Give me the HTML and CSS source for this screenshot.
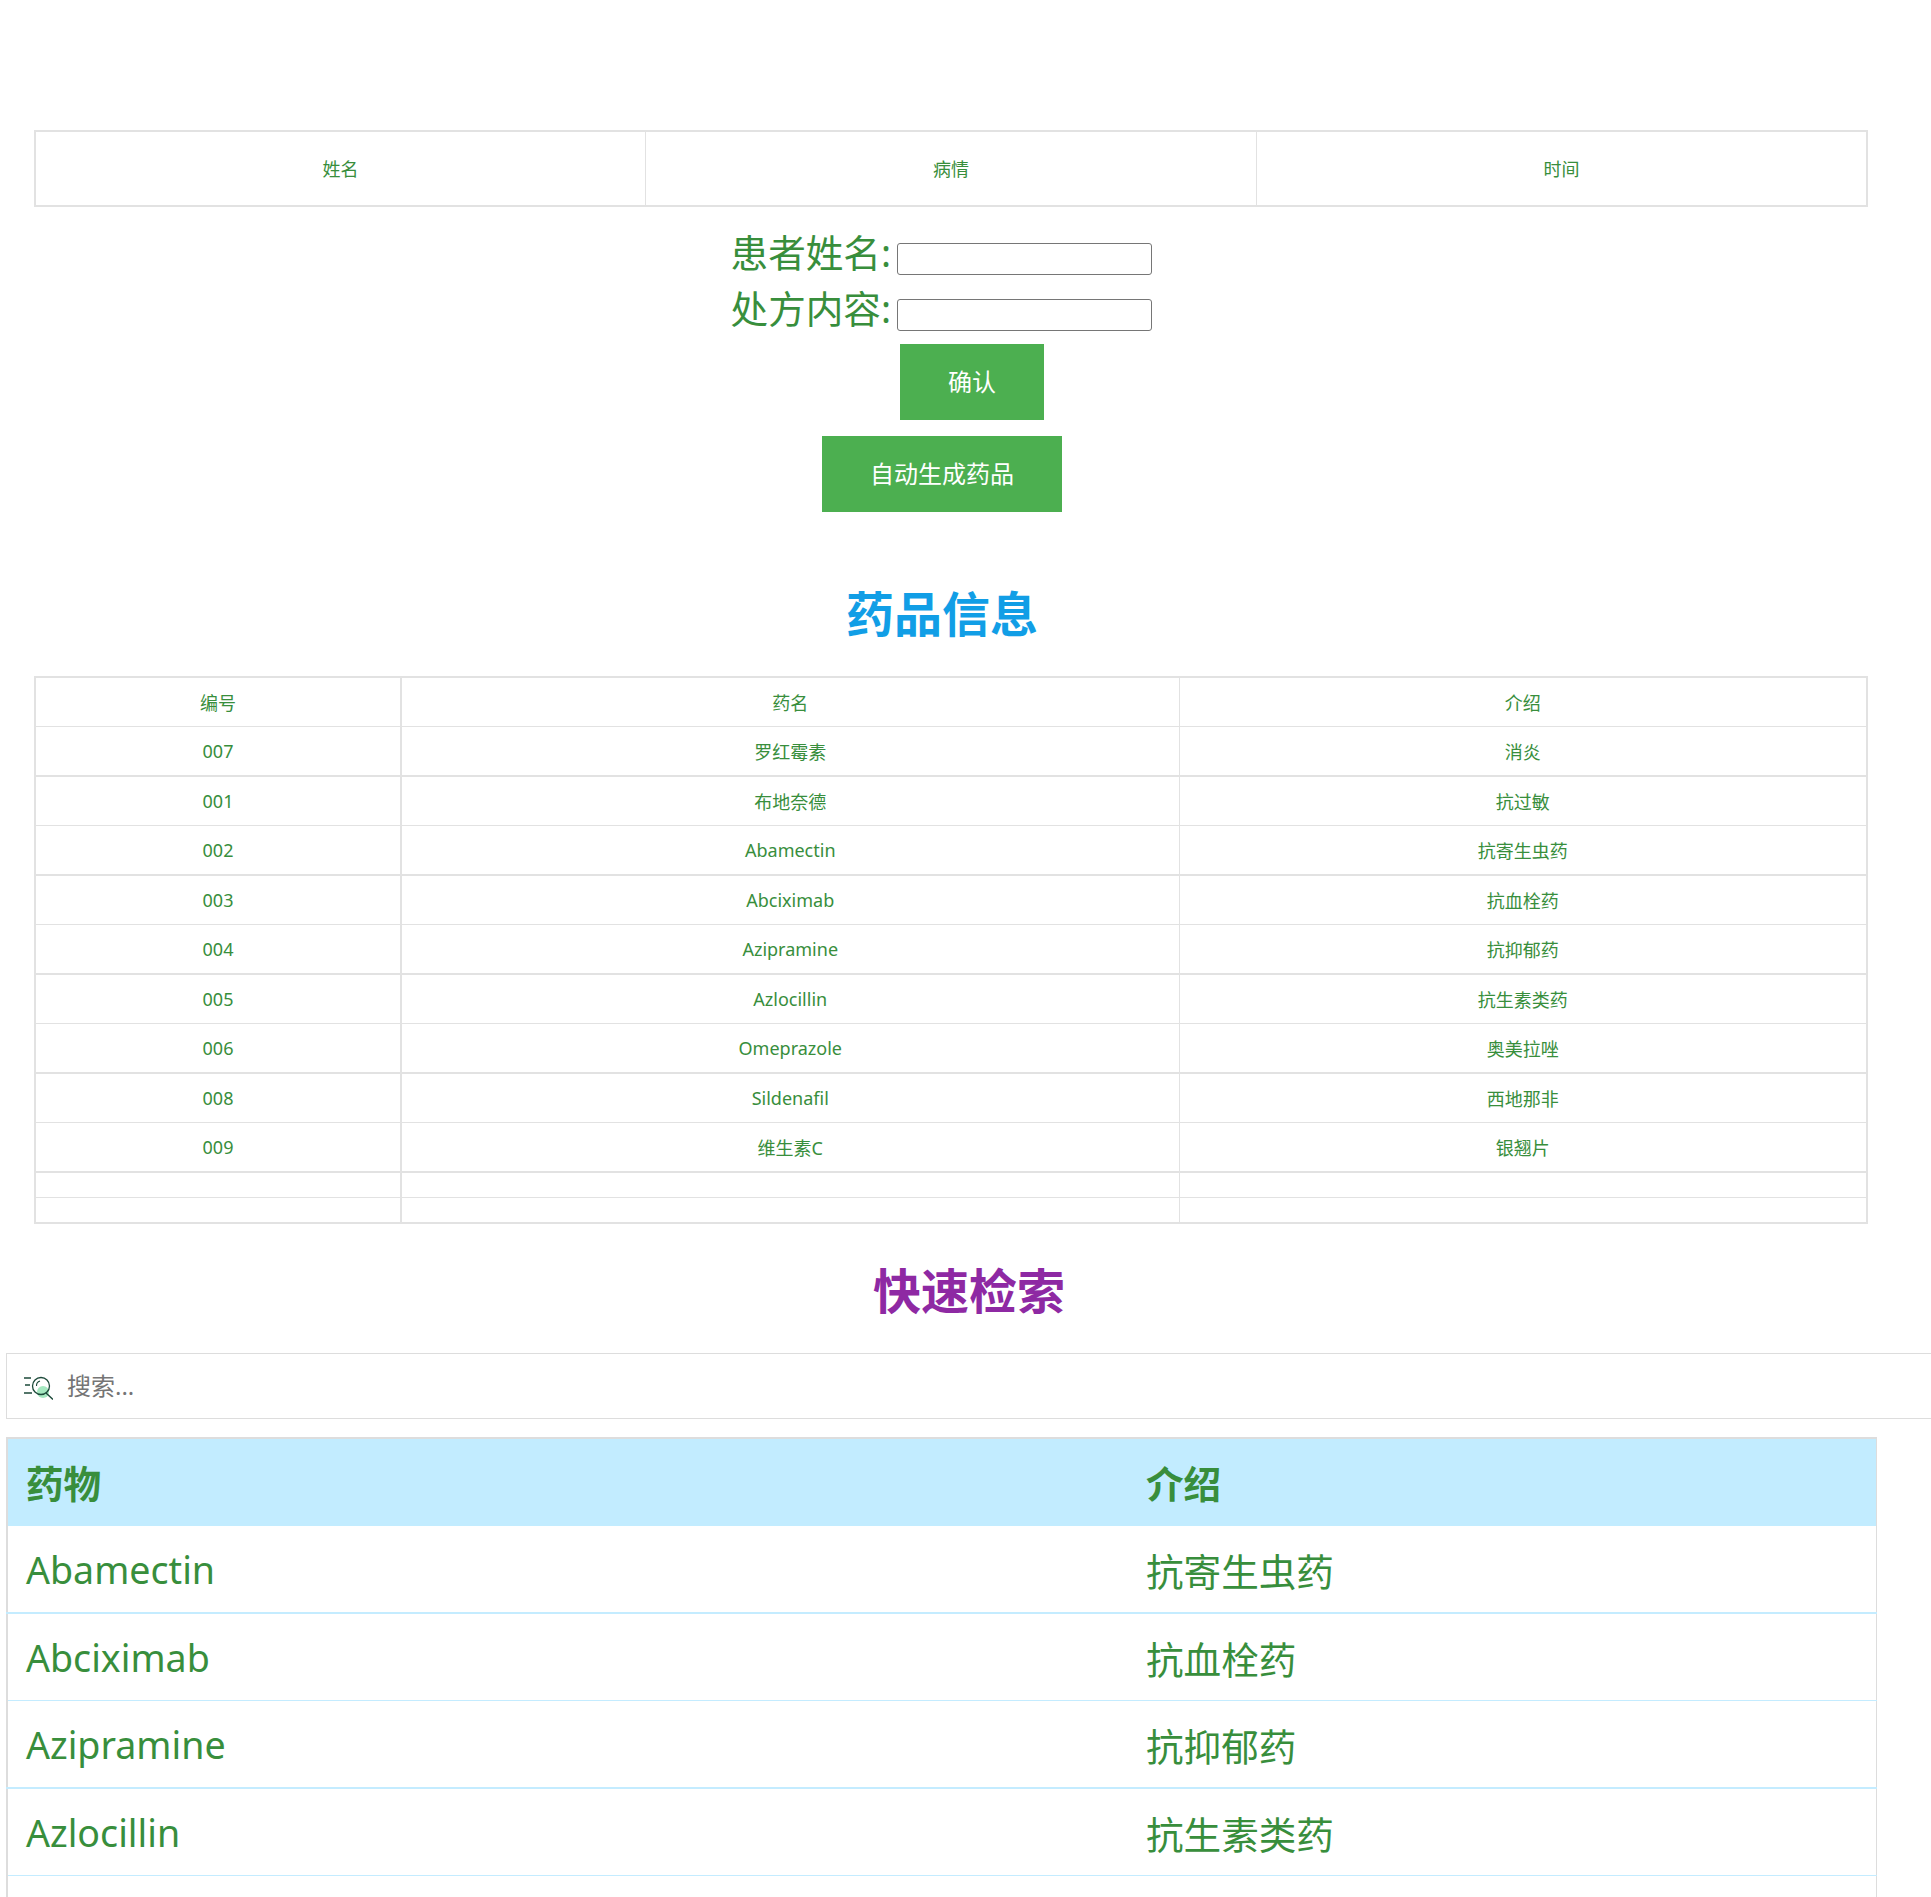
FILE: index.html
```html
<!DOCTYPE html>
<html lang="zh-CN">
<head>
<meta charset="utf-8">
<title>处方</title>
<link rel="stylesheet" href="styles.css">
</head>
<body>
<main class="page">
  <table class="records">
    <tr><td>姓名</td><td>病情</td><td>时间</td></tr>
  </table>
  <form class="rx-form">
    <div class="field"><label class="field-label">患者姓名:</label><input class="field-input" type="text"></div>
    <div class="field"><label class="field-label">处方内容:</label><input class="field-input" type="text"></div>
    <div class="confirm-row"><button class="btn" type="button">确认</button></div>
    <div class="auto-row"><button class="btn" type="button">自动生成药品</button></div>
  </form>
  <h2 class="title title-blue">药品信息</h2>
  <table class="drugs">
    <colgroup><col class="c1"><col class="c2"><col class="c3"></colgroup>
    <tr><td>编号</td><td>药名</td><td>介绍</td></tr>
    <tr><td>007</td><td>罗红霉素</td><td>消炎</td></tr>
    <tr><td>001</td><td>布地奈德</td><td>抗过敏</td></tr>
    <tr><td>002</td><td>Abamectin</td><td>抗寄生虫药</td></tr>
    <tr><td>003</td><td>Abciximab</td><td>抗血栓药</td></tr>
    <tr><td>004</td><td>Azipramine</td><td>抗抑郁药</td></tr>
    <tr><td>005</td><td>Azlocillin</td><td>抗生素类药</td></tr>
    <tr><td>006</td><td>Omeprazole</td><td>奥美拉唑</td></tr>
    <tr><td>008</td><td>Sildenafil</td><td>西地那非</td></tr>
    <tr><td>009</td><td>维生素C</td><td>银翘片</td></tr>
    <tr class="blank"><td></td><td></td><td></td></tr>
    <tr class="blank"><td></td><td></td><td></td></tr>
  </table>
  <h2 class="title title-purple">快速检索</h2>
  <div class="search">
    <svg class="search-icon" viewBox="0 0 29 24" aria-hidden="true">
      <circle cx="19" cy="16" r="6" fill="#a5e8c0"/>
      <circle cx="17" cy="10" r="8.5" fill="none" stroke="#1d4a3a" stroke-width="1.3"/>
      <path d="M12.5 10a5 5 0 0 1 3.5-5" fill="none" stroke="#1d4a3a" stroke-width="1.1"/>
      <path d="M22 17l7 6.500M0 2h7M1 9h5M0 17h8" fill="none" stroke="#1d4a3a" stroke-width="1.4"/>
    </svg>
    <span class="search-text">搜索...</span>
  </div>
  <table class="results">
    <tr class="results-head"><th>药物</th><th>介绍</th></tr>
    <tr><td>Abamectin</td><td>抗寄生虫药</td></tr>
    <tr><td>Abciximab</td><td>抗血栓药</td></tr>
    <tr><td>Azipramine</td><td>抗抑郁药</td></tr>
    <tr><td>Azlocillin</td><td>抗生素类药</td></tr>
    <tr><td></td><td></td></tr>
  </table>
</main>
</body>
</html>
```
FILE: styles.css
```css
html, body {
  margin: 0;
  padding: 0;
  height: 1897px;
  overflow: hidden;
  background: #fff;
}
body {
  font-family: "Noto Sans", "Noto Sans CJK SC", sans-serif;
  color: #388e3c;
}
.page {
  width: 1931px;
  padding-top: 130px;
  box-sizing: border-box;
}
table { border-collapse: collapse; table-layout: fixed; }

.records {
  width: 1834px;
  margin-left: 34px;
  border: 2px solid #e2e2e2;
  font-size: 18px;
}
.records td {
  height: 71px;
  padding: 0 0 2px;
  text-align: center;
  border-left: 1px solid #e2e2e2;
}

.rx-form { width: 1884px; }
.field {
  display: flex;
  justify-content: center;
  align-items: flex-end;
  gap: 6px;
  height: 56px;
}
.field:first-child { margin-top: 12px; }
.field-label {
  width: 171px;
  margin-left: -12px;
  box-sizing: border-box;
  padding-right: 0;
  font-size: 37.6px;
  line-height: 44px;
  white-space: nowrap;
  text-align: right;
}
.field-input {
  width: 255px;
  height: 32px;
  box-sizing: border-box;
  border: 1px solid #767676;
  border-radius: 3px;
  margin: 0;
  padding: 0;
  background: #fff;
}
.confirm-row { margin-top: 13px; padding-left: 900px; height: 76px; }
.auto-row { margin-top: 16px; text-align: center; height: 76px; }
.btn {
  display: inline-block;
  border: 0;
  background: #4caf50;
  color: #fff;
  font: inherit;
  font-size: 24px;
  line-height: 28px;
  padding: 24px 48px;
  vertical-align: top;
}

.title {
  margin: 0;
  font-size: 48px;
  line-height: 64px;
  font-weight: 700;
}
.title-blue { width: 1884px; text-align: center; color: #119ee6; margin-top: 70px; }
.title-purple { width: 1938px; text-align: center; color: #8e29a3; margin-top: 35px; }

.drugs {
  width: 1832px;
  margin-left: 34px;
  margin-top: 30px;
  border: 2px solid #e2e2e2;
  font-size: 18px;
}
.c1 { width: 366px; }
.c2 { width: 778px; }
.c3 { width: 688px; }
.drugs td {
  height: 48px;
  padding: 0;
  text-align: center;
  border-left: 2px solid #e2e2e2;
  border-bottom: 1px solid #e2e2e2;
}
.drugs td:nth-child(3) { border-left-width: 1px; }
.drugs tr:nth-child(2n) td { border-bottom-width: 2px; }
.drugs tr.blank td { height: 24px; border-bottom-width: 1px; }

.search {
  display: flex;
  align-items: center;
  width: 2000px;
  height: 66px;
  box-sizing: border-box;
  margin: 30px 0 0 6px;
  padding-left: 17px;
  border: 1px solid #ddd;
}
.search-icon { width: 29px; height: 24px; flex: none; margin-top: 4px; }
.search-text {
  margin: 0 0 4px 14px;
  font-size: 24px;
  color: #757575;
}

.results {
  width: 1871px;
  margin: 18px 0 0 6px;
  font-size: 37.6px;
  border-top: 2px solid #ddd;
  border-left: 2px solid #ddd;
  border-right: 1px solid #ddd;
}
.results th, .results td {
  padding: 0 0 0 18px;
  text-align: left;
  height: 86px;
  border-bottom: 1px solid #c4ecff;
}
.results th { font-weight: 700; height: 85px; padding-bottom: 2px; border-bottom: 0; }
.results-head { background: #c2ecff; }
.results tr:nth-child(2) td, .results tr:nth-child(4) td { border-bottom-width: 2px; }
.results th:first-child, .results td:first-child { width: 1102px; }
```
